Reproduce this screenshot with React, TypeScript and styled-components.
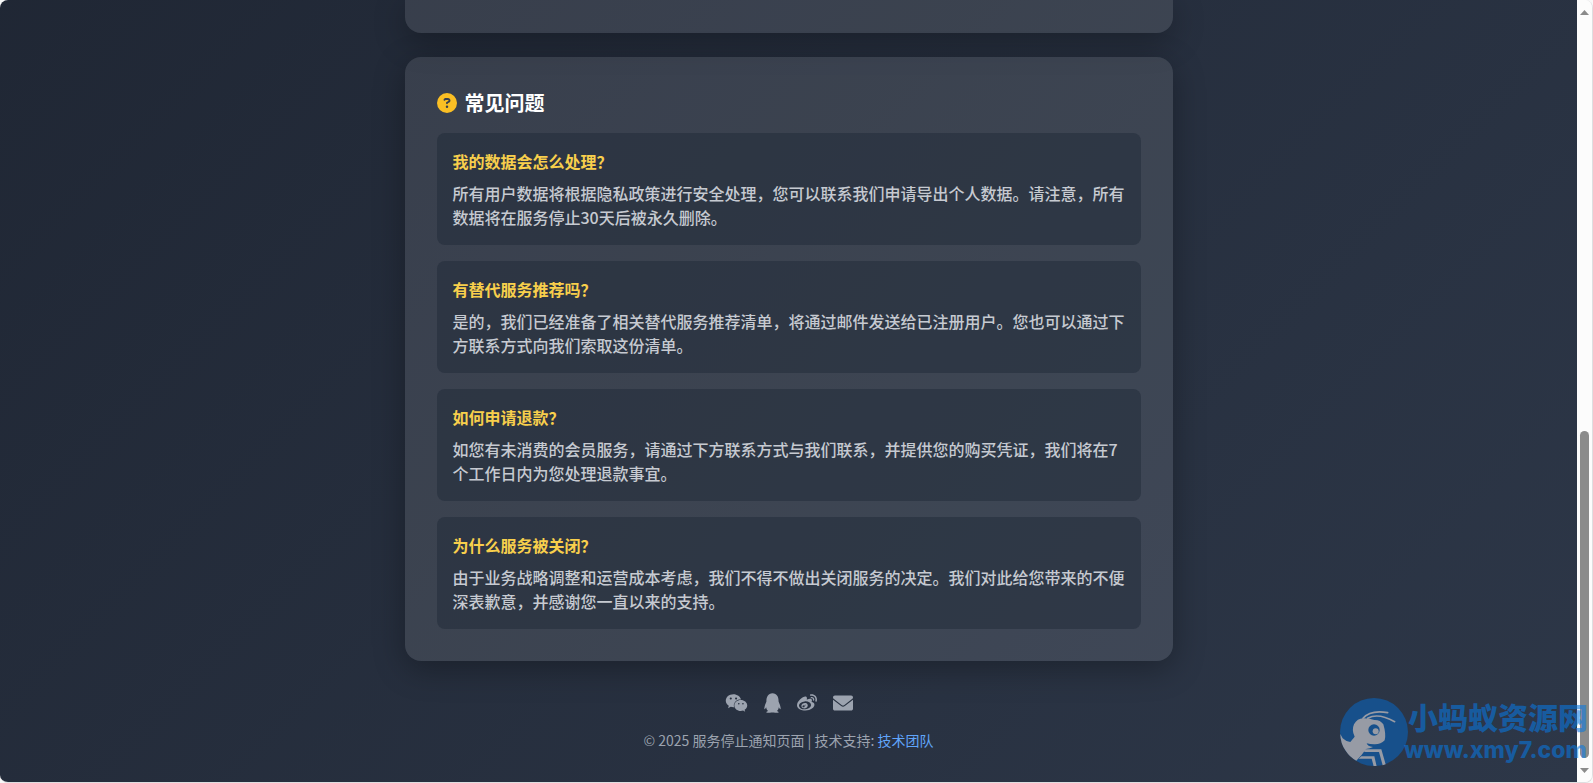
import React from 'react';
import styled, { createGlobalStyle } from 'styled-components';
import { FaCircleQuestion, FaWeixin, FaQq, FaWeibo } from 'react-icons/fa6';

const GlobalStyle = createGlobalStyle`
  *, *::before, *::after { box-sizing: border-box; }
  body {
    margin: 0;
    background: #f8f8f8;
    font-family: "Noto Sans CJK SC", sans-serif;
    font-size: 16px;
    line-height: 24px;
  }
  h2, h3, p { margin: 0; }
`;

const Frame = styled.div`
  position: relative;
  display: flex;
  height: 100vh;
  border: solid #dedee0;
  border-width: 0 1px 1px 0;
  border-radius: 8px;
  overflow: hidden;
`;

const Page = styled.div`
  flex: 1;
  min-width: 0;
  overflow: hidden;
  background: linear-gradient(135deg, #1a202c 0%, #2d3748 100%) 0 100% / 100% 230% no-repeat;
`;

const Column = styled.main`
  display: flex;
  flex-direction: column;
  gap: 24px;
  max-width: 768px;
  margin: 0 auto;
`;

const Card = styled.section<{ $tail?: boolean }>`
  padding: ${(p) => (p.$tail ? '0 32px 33px' : '32px')};
  border-radius: ${(p) => (p.$tail ? '0 0 16px 16px' : '16px')};
  background: rgba(255, 255, 255, 0.1);
  box-shadow: 0 8px 32px rgba(0, 0, 0, 0.3);
`;

const CardTitle = styled.h2`
  display: flex;
  align-items: center;
  gap: 8px;
  margin-bottom: 16px;
  font-size: 20px;
  line-height: 28px;
  font-weight: 700;
  color: #fff;
  svg { color: #fbbf24; }
`;

const FaqList = styled.div`
  display: flex;
  flex-direction: column;
  gap: 16px;
`;

const FaqItem = styled.article`
  padding: 16px;
  border-radius: 8px;
  background: rgba(31, 41, 55, 0.5);
`;

const Question = styled.h3`
  margin-bottom: 8px;
  font-size: 16px;
  font-weight: 700;
  color: #f8cf4c;
`;

const Answer = styled.p`
  font-weight: 500;
  color: #c6cad1;
`;

const Footer = styled.footer`
  padding: 32px 0;
  text-align: center;
  font-size: 14px;
  line-height: 20px;
  color: #9ca3af;
`;

const Socials = styled.nav`
  display: flex;
  justify-content: center;
  gap: 16px;
  margin-bottom: 17px;
`;

const SocialLink = styled.a<{ $width: number }>`
  display: flex;
  color: inherit;
  svg {
    width: ${(p) => p.$width}px;
    height: 20px;
  }
`;

const SupportLink = styled.a`
  color: #60a5fa;
  text-decoration: none;
`;

const Scrollbar = styled.div`
  display: flex;
  flex-direction: column;
  align-items: center;
  width: 15px;
  padding: 10px 0 9px;
  background: #fcfcfc;
`;

const Arrow = styled.svg`
  width: 9px;
  height: 5px;
  fill: #8b8b8b;
`;

const Track = styled.div`
  flex: 1;
  display: flex;
  flex-direction: column;
  justify-content: flex-end;
  padding-bottom: 10px;
`;

const Thumb = styled.div`
  width: 9px;
  height: 44%;
  border-radius: 5px;
  background: #8b8b8b;
`;

const Watermark = styled.div`
  position: absolute;
  right: 4px;
  bottom: 16px;
  display: flex;
  align-items: center;
  color: rgba(8, 121, 228, 0.56);
  pointer-events: none;
`;

const WatermarkText = styled.div`
  display: flex;
  flex-direction: column;
  margin-left: -4px;
  white-space: nowrap;
`;

const WatermarkName = styled.span`
  padding-left: 4px;
  font-size: 30px;
  line-height: 36px;
  font-weight: 900;
`;

const WatermarkUrl = styled.span`
  font-family: Inter, sans-serif;
  font-size: 23px;
  line-height: 32px;
  font-weight: 800;
`;

const faqs = [
  {
    q: '我的数据会怎么处理？',
    a: '所有用户数据将根据隐私政策进行安全处理，您可以联系我们申请导出个人数据。请注意，所有数据将在服务停止30天后被永久删除。',
  },
  {
    q: '有替代服务推荐吗？',
    a: '是的，我们已经准备了相关替代服务推荐清单，将通过邮件发送给已注册用户。您也可以通过下方联系方式向我们索取这份清单。',
  },
  {
    q: '如何申请退款？',
    a: '如您有未消费的会员服务，请通过下方联系方式与我们联系，并提供您的购买凭证，我们将在7个工作日内为您处理退款事宜。',
  },
  {
    q: '为什么服务被关闭？',
    a: '由于业务战略调整和运营成本考虑，我们不得不做出关闭服务的决定。我们对此给您带来的不便深表歉意，并感谢您一直以来的支持。',
  },
];

function EnvelopeIcon() {
  return (
    <svg viewBox="0 0 512 512" fill="currentColor" aria-hidden="true">
      <path d="M256 352c-16.53 0-33.06-5.422-47.16-16.41L0 173.2V400C0 426.5 21.49 448 48 448h416c26.51 0 48-21.49 48-48V173.2l-208.8 162.5C289.1 346.6 272.5 352 256 352zM16.29 145.3l212.2 165.1c16.19 12.6 38.87 12.6 55.06 0l212.2-165.1C505.1 137.3 512 125 512 112C512 85.49 490.5 64 464 64h-416C21.49 64 0 85.49 0 112C0 125 6.01 137.3 16.29 145.3z" />
    </svg>
  );
}

const socials = [
  { label: '微信', Icon: FaWeixin, width: 23 },
  { label: 'QQ', Icon: FaQq, width: 17 },
  { label: '微博', Icon: FaWeibo, width: 20 },
  { label: '邮箱', Icon: EnvelopeIcon, width: 20 },
];

function AntLogo() {
  return (
    <svg width="68" height="68" viewBox="14 15 204 204" aria-hidden="true">
      <circle cx="116" cy="117" r="102" fill="#17508b" />
      <g fill="#979ba5">
        <path d="M15 123 L22 136 Q32 146 45 147 L58 131 Q48 112 56 94 Q66 75 86 76 Q104 76 117 81 Q134 80 144 94 Q153 124 148 142 Q136 155 116 154 Q104 154 94 151 Q96 160 113 162 Q104 167 92 168 Q78 189 63 203 Q44 194 30 172 Q15 150 15 123Z" />
        <path d="M85 169H138L151 214L142 217L131 177H90L81 174Z" />
        <path d="M78 190H117L124 220H115L109 197H70Z" />
      </g>
      <g fill="none" stroke="#979ba5" strokeWidth="5" strokeLinecap="round">
        <path d="M83 76Q105 50 157 59" />
        <path d="M97 76Q128 58 178 86" />
      </g>
      <circle cx="116" cy="111" r="17" fill="#17508b" />
      <circle cx="121" cy="115" r="9" fill="#979ba5" />
    </svg>
  );
}

export default function App() {
  return (
    <>
      <GlobalStyle />
      <Frame>
        <Page>
          <Column>
            <Card $tail />
            <Card>
              <CardTitle>
                <FaCircleQuestion size={20} />
                常见问题
              </CardTitle>
              <FaqList>
                {faqs.map((f) => (
                  <FaqItem key={f.q}>
                    <Question>{f.q}</Question>
                    <Answer>{f.a}</Answer>
                  </FaqItem>
                ))}
              </FaqList>
            </Card>
          </Column>
          <Footer>
            <Socials>
              {socials.map(({ label, Icon, width }) => (
                <SocialLink key={label} href="#" aria-label={label} $width={width}>
                  <Icon />
                </SocialLink>
              ))}
            </Socials>
            <p>
              © 2025 服务停止通知页面 | 技术支持: <SupportLink href="#">技术团队</SupportLink>
            </p>
          </Footer>
        </Page>
        <Scrollbar aria-hidden="true">
          <Arrow viewBox="0 0 9 5"><path d="M4.5 0 9 5H0z" /></Arrow>
          <Track><Thumb /></Track>
          <Arrow viewBox="0 0 9 5"><path d="M0 0h9L4.5 5z" /></Arrow>
        </Scrollbar>
        <Watermark>
          <AntLogo />
          <WatermarkText>
            <WatermarkName>小蚂蚁资源网</WatermarkName>
            <WatermarkUrl>www.xmy7.com</WatermarkUrl>
          </WatermarkText>
        </Watermark>
      </Frame>
    </>
  );
}
